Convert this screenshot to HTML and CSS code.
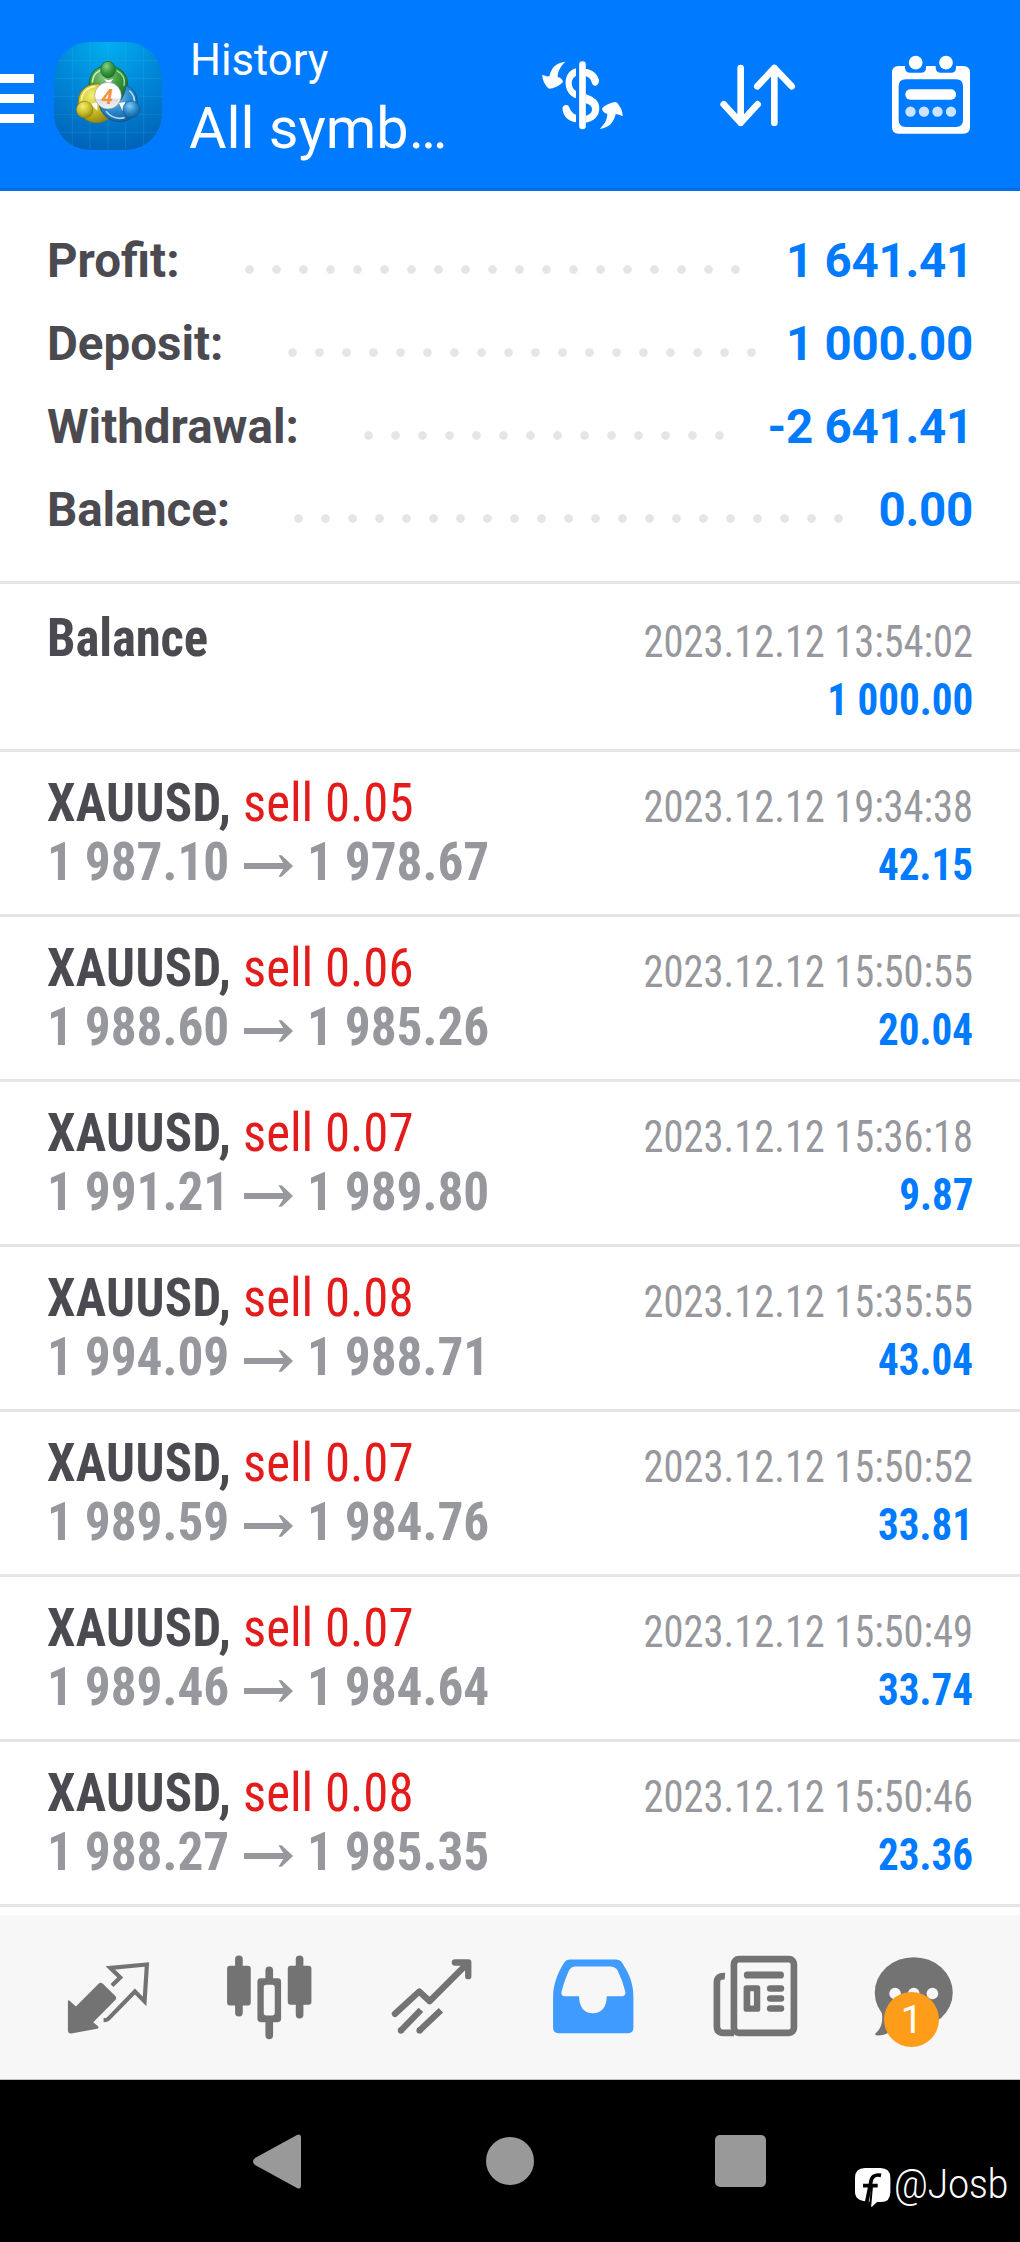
FILE: index.html
```
<!DOCTYPE html>
<html lang="en">
<head>
<meta charset="utf-8">
<title>History</title>
<link rel="stylesheet" href="styles.css">
</head>
<body>
<header class="topbar">
  <div class="menu"><i></i><i></i><i></i></div>
  <svg class="logo" viewBox="162 126 324 324">
    <defs>
      <radialGradient id="sky" cx=".5" cy="0" r="1"><stop offset="0" stop-color="#00b0f0"/><stop offset=".5" stop-color="#0087d8"/><stop offset="1" stop-color="#0064b9"/></radialGradient>
      <radialGradient id="green" cx=".4" cy=".3" r=".75"><stop offset="0" stop-color="#8fd08a"/><stop offset=".5" stop-color="#3c9a40"/><stop offset="1" stop-color="#1c6c25"/></radialGradient>
      <radialGradient id="yellow" cx=".4" cy=".3" r=".75"><stop offset="0" stop-color="#f3ee77"/><stop offset=".5" stop-color="#cfc32b"/><stop offset="1" stop-color="#93860f"/></radialGradient>
      <radialGradient id="blue" cx=".4" cy=".3" r=".75"><stop offset="0" stop-color="#86c9f3"/><stop offset=".5" stop-color="#2f8fcf"/><stop offset="1" stop-color="#125a99"/></radialGradient>
      <linearGradient id="disc" x1="0" y1="0" x2="0" y2="1"><stop offset=".6" stop-color="#fff"/><stop offset=".62" stop-color="#dcdcdf"/><stop offset="1" stop-color="#f4f4f6"/></linearGradient>
    </defs>
    <rect x="162" y="126" width="324" height="324" rx="108" fill="url(#sky)"/>
    <path d="M217 140V436M270 126V450M324 126V450M377 126V450M431 140V436M174 181H474M162 235H486M162 289H486M162 343H486M174 397H474" stroke="#5fc4f2" stroke-opacity=".2" stroke-width="2.5" fill="none"/>
    <g stroke-width="3">
      <path d="M268 262C264 218 292 196 324 198C362 198 386 226 382 256C380 278 372 292 362 304L290 262Z" fill="url(#green)" stroke="#1d6a2b"/>
      <path d="M277 248C278 222 296 210 312 208" fill="none" stroke="#c4efbd" stroke-width="5"/>
      <path d="M350 212C370 222 376 240 372 258" fill="none" stroke="#a5dba1" stroke-width="4"/>
      <path d="M300 252C268 248 238 268 235 300C230 346 262 370 292 368C312 366 326 358 336 346L300 310Z" fill="url(#yellow)" stroke="#8a7d12"/>
      <path d="M244 302C246 276 264 262 286 259" fill="none" stroke="#fbf8b4" stroke-width="5"/>
      <path d="M298 316C306 346 330 366 358 365C396 366 414 340 412 302C410 278 394 262 378 256C376 276 368 294 358 306Z" fill="url(#blue)" stroke="#145a93"/>
      <path d="M388 272C402 284 405 300 402 314M318 334C334 354 354 358 374 353" fill="none" stroke="#a3dbfa" stroke-width="5"/>
      <path d="M312 237L324 241L340 237L326 254ZM272 312L292 306L292 332ZM357 309L376 306L368 334Z" fill="#fff" stroke="none"/>
      <ellipse cx="324" cy="209" rx="22" ry="25" fill="url(#green)" stroke="#1d6a2b" stroke-width="2"/>
      <circle cx="254" cy="329" r="25" fill="url(#yellow)" stroke="#8a7d12" stroke-width="2"/>
      <circle cx="394" cy="328" r="25" fill="url(#blue)" stroke="#145a93" stroke-width="2"/>
      <circle cx="324" cy="287" r="40" fill="url(#disc)" stroke="#85858a" stroke-width="1.5"/>
    </g>
    <text x="322" y="312" text-anchor="middle" class="logo-digit">4</text>
  </svg>
  <div class="heading">
    <div class="heading-small">History</div>
    <div class="heading-large">All symb…</div>
  </div>
  <div class="actions">
    <svg width="85.3" height="72" viewBox="120 180 256 216" fill="#fff">
      <rect x="237.500" y="187" width="20" height="204" rx="10"/>
      <path d="M228 208C187 217 186 284 228 298V276C212 266 210 240 228 231Z"/>
      <path d="M256 209C277 211 293 225 297 243C297 252 294 257 288 260C281 261 277 257 275 250C272 240 267 234 256 231ZM188 332C186 323 192 318 199 318C205 318 207 322 209 328C213 338 219 344 228 347V370C204 366 190 351 188 332ZM257 285C287 296 298 308 298 328C298 351 283 367 257 371V350C270 347 276 341 276 331C276 322 270 317 257 313Z"/>
      <path id="swap" d="M196 188C164 193 155 207 148 232C140 234 133 228 127 227C126 243 138 263 147 269C160 269 180 260 189 249C188 241 180 235 173 234C173 216 182 202 196 188Z"/>
      <use href="#swap" transform="rotate(180 247.500 289)"/>
    </svg>
    <svg width="77" height="65" viewBox="657 192 231 195" fill="none" stroke="#fff" stroke-width="20" stroke-linecap="round" stroke-linejoin="round">
      <path d="M722 207V371M671 316L722 371L773 316M823 371V207M772 262L823 207L875 262"/>
    </svg>
    <svg width="82" height="82" viewBox="1170 162 246 246" fill="#fff">
      <path fill-rule="evenodd" d="M1196 198H1215V203Q1216 218 1231 218H1263Q1278 218 1278 203V198H1307V203Q1308 218 1323 218H1353Q1368 218 1368 203V198H1390Q1410 198 1410 218V381Q1410 401 1390 401H1196Q1176 401 1176 381V218Q1176 198 1196 198ZM1217 238Q1196 238 1196 259V360Q1196 381 1217 381H1368Q1389 381 1389 360V259Q1389 238 1368 238Z"/>
      <circle cx="1247" cy="188" r="20.500"/><circle cx="1338" cy="188" r="20.500"/>
      <rect x="1216" y="268" width="152" height="31" rx="15"/>
      <g fill="#cce4ff"><circle cx="1231.500" cy="335" r="15.500"/><circle cx="1272" cy="335" r="15.500"/><circle cx="1312.500" cy="335" r="15.500"/><circle cx="1353" cy="335" r="15.500"/></g>
    </svg>
  </div>
</header>

<section class="summary">
  <div class="total total-profit"><span class="total-name">Profit:</span><span class="leader"></span><span class="total-value">1 641.41</span></div>
  <div class="total total-deposit"><span class="total-name">Deposit:</span><span class="leader"></span><span class="total-value">1 000.00</span></div>
  <div class="total total-withdrawal"><span class="total-name">Withdrawal:</span><span class="leader"></span><span class="total-value">-2 641.41</span></div>
  <div class="total total-balance"><span class="total-name">Balance:</span><span class="leader"></span><span class="total-value">0.00</span></div>
</section>

<svg class="defs" width="0" height="0"><symbol id="arrow" viewBox="729 820 156 72"><path d="M729 847H853L838 824H848L884 856L848 888H838L853 865H729Z"/></symbol></svg>

<main class="deals">
  <article class="deal deal-deposit">
    <div class="line"><span class="title"><b>Balance</b></span><span class="date">2023.12.12 13:54:02</span></div>
    <div class="line"><span class="amount">1 000.00</span></div>
  </article>
  <article class="deal">
    <div class="line"><span class="title"><b>XAUUSD,</b> sell 0.05</span><span class="date">2023.12.12 19:34:38</span></div>
    <div class="line"><span class="prices">1 987.10<svg><use href="#arrow"/></svg>1 978.67</span><span class="amount">42.15</span></div>
  </article>
  <article class="deal">
    <div class="line"><span class="title"><b>XAUUSD,</b> sell 0.06</span><span class="date">2023.12.12 15:50:55</span></div>
    <div class="line"><span class="prices">1 988.60<svg><use href="#arrow"/></svg>1 985.26</span><span class="amount">20.04</span></div>
  </article>
  <article class="deal">
    <div class="line"><span class="title"><b>XAUUSD,</b> sell 0.07</span><span class="date">2023.12.12 15:36:18</span></div>
    <div class="line"><span class="prices">1 991.21<svg><use href="#arrow"/></svg>1 989.80</span><span class="amount">9.87</span></div>
  </article>
  <article class="deal">
    <div class="line"><span class="title"><b>XAUUSD,</b> sell 0.08</span><span class="date">2023.12.12 15:35:55</span></div>
    <div class="line"><span class="prices">1 994.09<svg><use href="#arrow"/></svg>1 988.71</span><span class="amount">43.04</span></div>
  </article>
  <article class="deal">
    <div class="line"><span class="title"><b>XAUUSD,</b> sell 0.07</span><span class="date">2023.12.12 15:50:52</span></div>
    <div class="line"><span class="prices">1 989.59<svg><use href="#arrow"/></svg>1 984.76</span><span class="amount">33.81</span></div>
  </article>
  <article class="deal">
    <div class="line"><span class="title"><b>XAUUSD,</b> sell 0.07</span><span class="date">2023.12.12 15:50:49</span></div>
    <div class="line"><span class="prices">1 989.46<svg><use href="#arrow"/></svg>1 984.64</span><span class="amount">33.74</span></div>
  </article>
  <article class="deal">
    <div class="line"><span class="title"><b>XAUUSD,</b> sell 0.08</span><span class="date">2023.12.12 15:50:46</span></div>
    <div class="line"><span class="prices">1 988.27<svg><use href="#arrow"/></svg>1 985.35</span><span class="amount">23.36</span></div>
  </article>
</main>

<nav class="tabs">
  <div class="tab"><svg viewBox="188.250 187.500 270 270">
    <path d="M203 332Q203 327 208 331L227 348L295 280Q301 274 307 279L346 317Q350 322 346 328L279 395L294 408Q297 413 291 415L213 429Q203 429 203 420Z"/>
    <path d="M335 285L360 261L330 232L440 222L433 333L404 303L324 385Q320 389 310 389" fill="none" stroke="#737373" stroke-width="12.500"/>
  </svg></div>
  <div class="tab"><svg viewBox="672.750 187.500 270 270">
    <rect x="682" y="226" width="71" height="119" rx="9"/><rect x="706" y="195" width="23" height="183" rx="11"/>
    <rect x="864" y="226" width="71" height="117" rx="9"/><rect x="888" y="195" width="23" height="189" rx="11"/>
    <path fill-rule="evenodd" d="M797 263V240Q797 228 808.500 228T820 240V263H834Q844 263 844 273V385Q844 395 834 395H820V434Q820 446 808.500 446T797 434V395H783Q773 395 773 385V273Q773 263 783 263ZM800 283Q792 283 792 291V367Q792 375 800 375H817Q825 375 825 367V291Q825 283 817 283Z"/>
  </svg></div>
  <div class="tab"><svg viewBox="1157.250 187.500 270 270">
    <path d="M1184 370L1257 303L1288 332L1402 218M1364 216H1404V257" stroke="#737373" stroke-width="19" stroke-linecap="round" stroke-linejoin="round" fill="none"/>
    <path d="M1201 421L1262 358M1257 421L1322 359" stroke="#737373" stroke-width="19" fill="none"/>
    <circle cx="1202" cy="420" r="9.500"/><circle cx="1258" cy="420" r="9.500"/>
  </svg></div>
  <div class="tab"><svg class="active" viewBox="111.750 187.500 270 270">
    <path fill-rule="evenodd" d="M180 207H318Q330 207 337 217C362 255 371 285 371 320V412Q371 428 355 428H146Q130 428 130 412V320C130 285 142 250 163 217Q170 207 180 207ZM198 228Q184 229 178 239Q162 275 155 305Q154 317 166 317H208C208 350 224 368 249 368C275 368 291 350 291 317H336Q347 317 347 305Q340 275 324 241Q318 229 302 228Z"/>
  </svg></div>
  <div class="tab"><svg viewBox="596.250 187.500 270 270">
    <g fill="none" stroke="#737373" stroke-width="20"><rect x="671" y="206" width="180" height="221" rx="15"/><path d="M644 257Q620 255 620 276V407Q620 427 640 427H671"/></g>
    <rect x="701" y="243" width="120" height="21" rx="10"/>
    <path fill-rule="evenodd" d="M709 284H742Q750 284 750 292V356Q750 364 742 364H709Q700 364 700 356V292Q700 284 709 284ZM720 302V345H731V302Z"/>
    <rect x="770" y="284" width="52" height="20" rx="10"/><rect x="770" y="314" width="52" height="20" rx="10"/><rect x="770" y="344" width="52" height="20" rx="10"/>
  </svg></div>
  <div class="tab"><div class="chat"><svg viewBox="1080.750 187.500 270 270">
    <ellipse cx="1212" cy="306.500" rx="117" ry="106.500"/><path d="M1115 360C1122 392 1114 416 1097 429Q1093 434 1103 435Q1125 435 1150 420Z"/>
    <g fill="#f7f7f7"><circle cx="1156" cy="309" r="17.500"/><circle cx="1212" cy="309" r="17.500"/><circle cx="1268" cy="309" r="17.500"/></g>
  </svg><span class="badge">1</span></div></div>
</nav>

<footer class="system">
  <svg class="back" viewBox="0 0 48 55"><path d="M44 1Q48 -1 48 4V51Q48 56 44 54L2 31Q-2 27.500 2 24Z"/></svg>
  <svg class="home" viewBox="0 0 48 48"><circle cx="24" cy="24" r="24"/></svg>
  <svg class="recent" viewBox="0 0 51 52"><rect width="51" height="52" rx="5"/></svg>
  <div class="credit">
    <svg viewBox="46 54 106 118"><path fill="#fff" d="M76 54H122Q152 54 152 84V126Q152 156 124 156H112L95 172L94 155Q46 156 46 126V84Q46 54 76 54Z"/><path d="M124 76Q96 70 93 98L81 157M70 107H114" fill="none" stroke="#000" stroke-width="11"/><path d="M97 107L92 162" stroke="#000" stroke-width="6"/></svg>
    <span>@Josb</span>
  </div>
</footer>
</body>
</html>
```
FILE: styles.css
```
* { box-sizing: border-box; }
body { margin: 0; width: 1020px; background: #fff; font-family: Roboto, "Liberation Sans", sans-serif; color: #4b4a50; }
svg { display: block; flex: none; }
.defs { display: none; }

.topbar { display: flex; align-items: flex-start; height: 191px; background: #007aff; border-bottom: 3px solid #0070e8; color: #fff; }
.menu { display: flex; flex-direction: column; gap: 11px; width: 34px; margin-top: 73.500px; }
.menu i { height: 9.300px; background: #fff; }
.logo { width: 108px; height: 108px; margin: 42px 28px 0 20px; }
.logo-digit { font: italic 700 62px Roboto, sans-serif; fill: #f2933b; }
.heading { width: 350px; padding-top: 32px; white-space: nowrap; }
.heading-small { font-size: 43.500px; line-height: 57px; }
.heading-large { margin: 2px 0 0 -1px; font-size: 57.600px; line-height: 76px; }
.actions { display: flex; align-items: center; gap: 93.800px; height: 82px; margin-top: 54px; }

.summary { height: 393px; padding: 28px 47px 0 47px; border-bottom: 3px solid #e5e5e5; }
.total { display: flex; height: 83px; font-weight: 700; font-size: 47.500px; line-height: 85px; white-space: nowrap; }
.leader { height: 9px; margin-top: 46px; background: radial-gradient(circle at 4.500px 4.500px, #e5e5e5 3.900px, transparent 4.700px) 0 0 / 27px 9px repeat-x; }
.total-value { margin-left: auto; color: #007aff; letter-spacing: -.25px; }
.total-profit .total-name { width: 198.200px; }
.total-profit .leader { width: 513px; }
.total-deposit .total-name { width: 241.300px; }
.total-deposit .leader { width: 486px; }
.total-withdrawal .total-name { width: 317.200px; }
.total-withdrawal .leader { width: 378px; }
.total-balance .total-name { width: 247.300px; letter-spacing: -.15px; }
.total-balance .leader { width: 567px; }

.deals { height: 1331px; }
.deal { height: 165px; padding: 23px 47px 0 47px; border-bottom: 3px solid #e5e5e5; font-family: "Roboto Condensed", Roboto, sans-serif; white-space: nowrap; }
.deal-deposit { height: 168px; padding-top: 26px; }
.line { display: flex; align-items: flex-start; height: 58px; }
.title, .prices { font-size: 54px; line-height: 56px; transform-origin: 0 0; }
.title { color: #e31b1b; transform: scaleX(.94); }
.title b { color: #4b4a50; letter-spacing: .4px; }
.deal-deposit .title b { letter-spacing: -.1px; }
.prices { display: flex; line-height: 58px; font-weight: 700; color: #97989d; transform: scaleX(.95); }
.prices svg { width: 54.700px; height: 24px; margin: 21px 12.700px 0 14.400px; fill: #97989d; }
.date, .amount { margin-left: auto; font-size: 44.500px; line-height: 65px; transform-origin: 100% 0; }
.date { color: #97989d; transform: scaleX(.91); }
.amount { font-weight: 700; color: #007aff; transform: scaleX(.922); }

.tabs { display: flex; align-items: center; height: 165px; padding: 1px 24px 0 27px; background: #f7f7f7; border-bottom: 1px solid #c0c0c0; }
.tab { display: flex; justify-content: center; flex: 1; }
.tab svg { width: 90px; height: 90px; fill: #737373; }
.tab svg.active { fill: #3f9bff; }
.chat { position: relative; width: 90px; height: 90px; }
.badge { position: absolute; left: 14px; top: 39.500px; width: 55px; height: 55px; border-radius: 50%; background: #ff9d1a; color: #fff; font-size: 39px; line-height: 57px; text-align: center; }

.system { display: flex; align-items: flex-start; height: 162px; background: #000; fill: #999; }
.back { width: 48px; height: 55px; margin: 54px 0 0 253px; }
.home { width: 48px; height: 48px; margin: 57px 0 0 185.200px; }
.recent { width: 51px; height: 52px; margin: 55px 0 0 180.800px; }
.credit { display: flex; align-items: flex-start; margin: 88px 0 0 89.300px; color: #fff; font-weight: 350; font-size: 40px; line-height: 40px; }
.credit svg { width: 35.400px; height: 39.400px; }
.credit span { margin: -3px 0 0 3.500px; transform: scaleX(.925); transform-origin: 0 0; }
```
